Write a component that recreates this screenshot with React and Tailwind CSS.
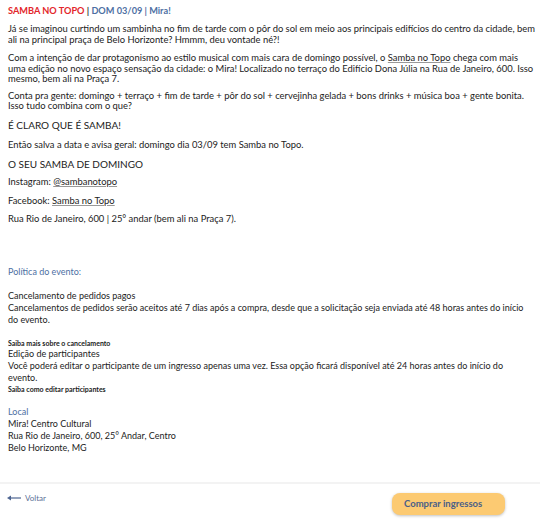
import React from 'react';

const Link = ({ children }) => (
  <span className="underline decoration-[#999] underline-offset-1">{children}</span>
);

export default function App() {
  return (
    <div className="w-[540px] h-[522px] bg-white font-['Lato',sans-serif] text-[#222] flex flex-col">
      <div className="flex-1 pl-2 pr-[3px] pt-[4px]">
        <h1 className="text-[9.2px] font-bold leading-[14px]">
          <span className="text-[#e3262b]">SAMBA NO TOPO</span>
          <span className="text-[#333]"> | </span>
          <span className="text-[#4d6fa3]">DOM 03/09 | Mira!</span>
        </h1>

        <div className="mt-[6px] text-[9.4px] leading-[10.5px] text-[#222]">
          <p>
            Já se imaginou curtindo um sambinha no fim de tarde com o pôr do sol em meio aos principais edifícios do centro da cidade, bem ali na principal praça de Belo Horizonte? Hmmm, deu vontade né?!
          </p>
          <p className="mt-[8px]">
            Com a intenção de dar protagonismo ao estilo musical com mais cara de domingo possível, o <Link>Samba no Topo</Link> chega com mais uma edição no novo espaço sensação da cidade: o Mira! Localizado no terraço do Edifício Dona Júlia na Rua de Janeiro, 600. Isso mesmo, bem ali na Praça 7.
          </p>
          <p className="mt-[6px]">
            Conta pra gente: domingo + terraço + fim de tarde + pôr do sol + cervejinha gelada + bons drinks + música boa + gente bonita. Isso tudo combina com o que?
          </p>
          <p className="mt-[8px] text-[10px]">É CLARO QUE É SAMBA!</p>
          <p className="mt-[10px]">Então salva a data e avisa geral: domingo dia 03/09 tem Samba no Topo.</p>
          <p className="mt-[8px] text-[10px]">O SEU SAMBA DE DOMINGO</p>
          <p className="mt-[8px]">Instagram: <Link>@sambanotopo</Link></p>
          <p className="mt-[8px]">Facebook: <Link>Samba no Topo</Link></p>
          <p className="mt-[8px]">Rua Rio de Janeiro, 600 | 25° andar (bem ali na Praça 7).</p>
        </div>

        <div className="mt-[41px] pr-[4px] text-[9px] leading-[12px] text-[#222]">
          <p className="text-[#4d6fa3]">Política do evento:</p>
          <p className="mt-[12px]">Cancelamento de pedidos pagos</p>
          <p>Cancelamentos de pedidos serão aceitos até 7 dias após a compra, desde que a solicitação seja enviada até 48 horas antes do início do evento.</p>
          <p className="mt-[12px] text-[7px] font-bold leading-[10px]">Saiba mais sobre o cancelamento</p>
          <p>Edição de participantes</p>
          <p>Você poderá editar o participante de um ingresso apenas uma vez. Essa opção ficará disponível até 24 horas antes do início do evento.</p>
          <p className="text-[7px] font-bold leading-[10px]">Saiba como editar participantes</p>

          <p className="mt-[12px] text-[#4d6fa3]">Local</p>
          <p>Mira! Centro Cultural</p>
          <p>Rua Rio de Janeiro, 600, 25° Andar, Centro</p>
          <p>Belo Horizonte, MG</p>
        </div>
      </div>

      <div className="h-[40px] border-t-2 border-[#f3f3f3] flex items-start justify-between pl-[7px] pr-[35px]">
        <button className="mt-[8px] flex items-center gap-[4px] text-[8px] text-[#5a6f96]">
          <svg width="14" height="6" viewBox="0 0 14 6">
            <path d="M0 3 L4 0.5 L4 5.5 Z" fill="#4d6491" />
            <path d="M3 3 H14" stroke="#4d6491" strokeWidth="1.2" />
          </svg>
          Voltar
        </button>
        <button className="mt-[9px] w-[113px] h-[22px] rounded-[8px] bg-[#fcca72] shadow-[0_1px_3px_rgba(0,0,0,0.25)] text-[9.5px] font-bold text-[#4b6088] text-left pl-[12px]">
          Comprar ingressos
        </button>
      </div>
    </div>
  );
}
